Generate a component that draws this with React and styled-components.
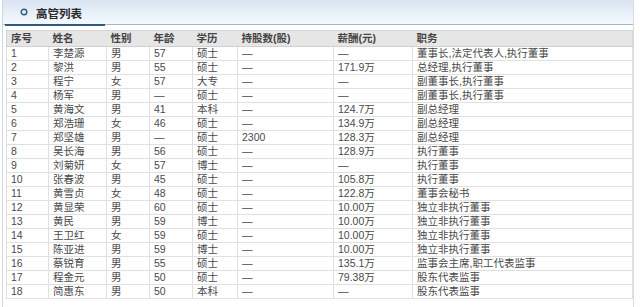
import React from 'react'
import styled, { createGlobalStyle } from 'styled-components';

const GlobalStyle = createGlobalStyle`
    html, body {
        margin: 0;
        padding: 0;
        background: #ffffff;
    }
    body {
        font-family: "Liberation Sans", "Noto Sans CJK SC", sans-serif;
    }
`;

const Page = styled.div`
    width: 640px;
    height: 307px;
    overflow: hidden;
    background: #fff;
`;

const Panel = styled.div`
    margin-left: 2px;
    width: 630px;
    height: 320px;
    border-left: 1px solid #c9d9e7;
    border-right: 1px solid #d3dde6;
`;

const TitleBar = styled.div`
    height: 24px;
    display: flex;
    align-items: center;
    padding-left: 17px;
    gap: 8px;
    background: linear-gradient(to bottom, #d9e5f1, #f4f9fe);
`;

const Title = styled.h3`
    margin: 0;
    font-size: 11.5px;
    font-weight: bold;
    color: #2a2a2a;
    font-family: "Noto Sans CJK SC", sans-serif;
    line-height: 24px;
    padding-top: 2px;
`;

const Rule = styled.div`
    height: 1px;
    background: #a3b8c9;
    position: relative;

    &::before{
        content: "";
        position: absolute;
        left: 2px;
        top: 0;
        width: 100px;
        height: 2px;
        background: #2d5a7e;
    }
`;

const Table = styled.table`
    margin: 5px 0 0 3px;
    width: 626px;
    table-layout: fixed;
    border-collapse: collapse;
    font-size: 10.5px;
    color: #4a4a4a;
    border: 1px solid #d6d6d6;
`;

const Th = styled.th`
    height: 15px;
    padding: 0 0 0 4px;
    text-align: left;
    font-weight: bold;
    color: #444;
    background: #e6e6e6;
    border-bottom: 1px solid #d0d0d0;
    line-height: 15px;
    white-space: nowrap;
`;

const Td = styled.td`
    height: 13px;
    padding: 0 0 0 4px;
    border: 1px solid #e0e0e0;
    line-height: 13px;
    white-space: nowrap;
    overflow: hidden;
`;

const columns = [
    { label: '序号', width: 42 },
    { label: '姓名', width: 58 },
    { label: '性别', width: 43 },
    { label: '年龄', width: 43 },
    { label: '学历', width: 45 },
    { label: '持股数(股)', width: 96 },
    { label: '薪酬(元)', width: 79 },
    { label: '职务', width: 220 },
];

const rows = [
    ['1', '李楚源', '男', '57', '硕士', '—', '—', '董事长,法定代表人,执行董事'],
    ['2', '黎洪', '男', '55', '硕士', '—', '171.9万', '总经理,执行董事'],
    ['3', '程宁', '女', '57', '大专', '—', '—', '副董事长,执行董事'],
    ['4', '杨军', '男', '—', '硕士', '—', '—', '副董事长,执行董事'],
    ['5', '黄海文', '男', '41', '本科', '—', '124.7万', '副总经理'],
    ['6', '郑浩珊', '女', '46', '硕士', '—', '134.9万', '副总经理'],
    ['7', '郑坚雄', '男', '—', '硕士', '2300', '128.3万', '副总经理'],
    ['8', '吴长海', '男', '56', '硕士', '—', '128.9万', '执行董事'],
    ['9', '刘菊妍', '女', '57', '博士', '—', '—', '执行董事'],
    ['10', '张春波', '男', '45', '硕士', '—', '105.8万', '执行董事'],
    ['11', '黄雪贞', '女', '48', '硕士', '—', '122.8万', '董事会秘书'],
    ['12', '黄显荣', '男', '60', '硕士', '—', '10.00万', '独立非执行董事'],
    ['13', '黄民', '男', '59', '博士', '—', '10.00万', '独立非执行董事'],
    ['14', '王卫红', '女', '59', '硕士', '—', '10.00万', '独立非执行董事'],
    ['15', '陈亚进', '男', '59', '博士', '—', '10.00万', '独立非执行董事'],
    ['16', '蔡锐育', '男', '55', '硕士', '—', '135.1万', '监事会主席,职工代表监事'],
    ['17', '程金元', '男', '50', '硕士', '—', '79.38万', '股东代表监事'],
    ['18', '简惠东', '男', '50', '本科', '—', '—', '股东代表监事'],
];

function Bullet() {
    return (
        <svg width="8" height="8" viewBox="0 0 8 8">
            <circle cx="4" cy="4" r="2.8" fill="none" stroke="#2d5a7e" strokeWidth="1.4" />
        </svg>
    );
}

export default function App() {
    return (
        <Page>
            <GlobalStyle />
            <Panel>
                <TitleBar>
                    <Bullet />
                    <Title>高管列表</Title>
                </TitleBar>
                <Rule />
                <Table>
                    <colgroup>
                        {columns.map(c => <col key={c.label} style={{ width: c.width }} />)}
                    </colgroup>
                    <thead>
                        <tr>
                            {columns.map(c => <Th key={c.label}>{c.label}</Th>)}
                        </tr>
                    </thead>
                    <tbody>
                        {rows.map(r => (
                            <tr key={r[0]}>
                                {r.map((v, i) => <Td key={i}>{v}</Td>)}
                            </tr>
                        ))}
                    </tbody>
                </Table>
            </Panel>
        </Page>
    )
}
